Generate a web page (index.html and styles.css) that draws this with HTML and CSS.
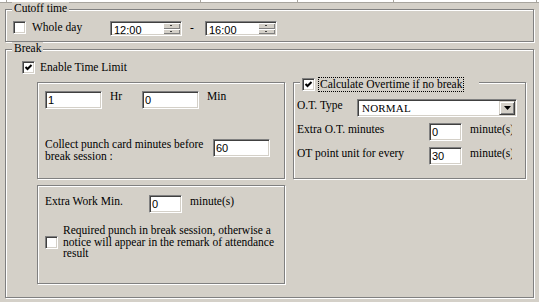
FILE: index.html
```html
<!DOCTYPE html>
<html lang="en">
<head>
    <meta charset="UTF-8">
    <title>Break settings</title>
    <link rel="stylesheet" href="styles.css">
</head>
<body>
    <!-- bottom edge of the grid above -->
    <div class="grid-edge">
        <span class="cell c1"></span><span class="cell c2"></span><span class="cell c3"></span><span class="cell c4"></span><span class="cell c5"></span>
    </div>

    <!-- Cutoff time -->
    <div class="group cutoff">
        <span class="legend">Cutoff time</span>
        <div class="cutoff-row">
            <span class="check"></span>
            <span class="day-label">Whole day</span>
            <div class="spin">
                <span class="spin-text">12:00</span>
                <span class="spin-btns"><span class="spin-btn up"></span><span class="spin-btn down"></span></span>
            </div>
            <span class="dash">-</span>
            <div class="spin">
                <span class="spin-text">16:00</span>
                <span class="spin-btns"><span class="spin-btn up"></span><span class="spin-btn down"></span></span>
            </div>
        </div>
    </div>

    <!-- Break -->
    <div class="group break">
        <span class="legend">Break</span>
        <div class="check-row">
            <span class="check checked"><svg viewBox="0 0 9 9" width="9" height="9"><polyline points="1.5,4 3.5,6 7.5,2" fill="none" stroke="#000" stroke-width="2"/></svg></span>
            <span class="check-label">Enable Time Limit</span>
        </div>

        <div class="cols">
            <div class="left-col">
                <div class="panel limit">
                    <div class="row">
                        <input class="field w57" type="text" value="1">
                        <span class="unit hr">Hr</span>
                        <input class="field w57" type="text" value="0">
                        <span class="unit">Min</span>
                    </div>
                    <div class="row collect">
                        <span class="collect-label">Collect punch card minutes before break session :</span>
                        <input class="field w57" type="text" value="60">
                    </div>
                </div>

                <div class="panel extra">
                    <div class="row">
                        <span class="extra-label">Extra Work Min.</span>
                        <input class="field w33" type="text" value="0">
                        <span class="unit">minute(s)</span>
                    </div>
                    <div class="row required">
                        <span class="check"></span>
                        <span class="required-text">Required punch in break session, otherwise a notice will appear in the remark of attendance result</span>
                    </div>
                </div>
            </div>

            <div class="panel ot">
                <div class="ot-legend">
                    <span class="check checked"><svg viewBox="0 0 9 9" width="9" height="9"><polyline points="1.5,4 3.5,6 7.5,2" fill="none" stroke="#000" stroke-width="2"/></svg></span>
                    <span class="focus">Calculate Overtime if no break</span>
                </div>
                <div class="row">
                    <span class="ot-type">O.T. Type</span>
                    <div class="combo">
                        <span class="combo-text">NORMAL</span>
                        <span class="combo-btn"><svg viewBox="0 0 7 4" width="7" height="4"><polygon points="0,0 7,0 3.5,4" fill="#000"/></svg></span>
                    </div>
                </div>
                <div class="row ot-row">
                    <span class="ot-label">Extra O.T. minutes</span>
                    <input class="field w33" type="text" value="0">
                    <span class="unit clip">minute(s)</span>
                </div>
                <div class="row ot-row">
                    <span class="ot-label">OT point unit for every</span>
                    <input class="field w33" type="text" value="30">
                    <span class="unit clip">minute(s)</span>
                </div>
            </div>
        </div>
    </div>
</body>
</html>
```

FILE: styles.css
```css
body {
    margin: 0;
    width: 539px;
    height: 302px;
    overflow: hidden;
    background: #d4d0c8;
    color: #000;
    font-family: "Liberation Serif", "Times New Roman", serif;
    font-size: 11.5px;
    line-height: 13px;
}
.grid-edge {
    display: flex;
    height: 2px;
    background: #fff;
    border-bottom: 1px solid #a8a59e;
}
.cell {
    border-right: 1px solid #a8a59e;
}
.c1 { width: 6px; }
.c2 { width: 193px; }
.c3 { width: 96px; }
.c4 { width: 95px; }
.c5 { width: 142px; }

/* etched group boxes */
.group, .panel {
    position: relative;
    box-sizing: border-box;
    border: 1px solid #808080;
    box-shadow: inset 1px 1px 0 #fff, 1px 1px 0 #fff;
}
.group {
    margin-left: 5px;
    width: 529px;
}
.legend {
    position: absolute;
    top: -8px;
    left: 6px;
    padding: 0 2px;
    background: #d4d0c8;
}
.cutoff {
    margin-top: 6px;
    height: 33px;
}
.break {
    margin-top: 7px;
    height: 249px;
    padding: 11px 0 0 16px;
}

/* sunken controls */
.check, .field, .spin, .combo {
    box-sizing: border-box;
    border: 1px solid;
    border-color: #808080 #fff #fff #808080;
    box-shadow: inset 1px 1px 0 #404040, inset -1px -1px 0 #d4d0c8;
    background: #fff;
}
.check {
    display: flex;
    align-items: center;
    justify-content: center;
    flex: none;
    width: 13px;
    height: 13px;
}
.check svg {
    display: block;
}
.field {
    height: 18px;
    margin: 0;
    padding: 0 2px;
    font-family: "Liberation Sans", Arial, sans-serif;
    font-size: 11px;
    color: #000;
    outline: none;
}
.w57 { width: 57px; }
.w33 { width: 33px; }

.cutoff-row {
    display: flex;
    align-items: flex-start;
    padding: 11px 0 0 7px;
}
.day-label {
    width: 78px;
    margin-left: 6px;
}
.spin {
    display: flex;
    width: 72px;
    height: 15px;
    padding: 1px;
}
.spin-text {
    flex: 1;
    padding-left: 2px;
    font-family: "Liberation Sans", Arial, sans-serif;
    font-size: 11px;
    line-height: 12px;
    margin-top: 1px;
}
.spin-btns {
    display: flex;
    flex-direction: column;
    width: 17px;
}
.spin-btn {
    flex: 1;
    position: relative;
    background: #d4d0c8;
    box-shadow: inset 1px 1px 0 #fff, inset -1px -1px 0 #808080;
}
.spin-btn::after {
    content: "";
    position: absolute;
    left: 7px;
    top: 2px;
    width: 2px;
    height: 1px;
    background: #404040;
}
.dash {
    width: 15px;
    margin-left: 8px;
}

.check-row {
    display: flex;
    align-items: center;
    height: 13px;
}
.check-label {
    margin-left: 5px;
}

.cols {
    display: flex;
    align-items: flex-start;
    gap: 8px;
    margin: 8px 0 0 15px;
}
.left-col {
    display: flex;
    flex-direction: column;
    gap: 6px;
    width: 248px;
}
.row {
    display: flex;
    align-items: flex-start;
}
.unit {
    margin-left: 8px;
}
.hr {
    width: 32px;
}

.limit {
    height: 97px;
    padding: 8px 0 0 7px;
}
.limit .unit {
    margin-top: -1px;
}
.collect {
    margin-top: 29px;
}
.collect-label {
    width: 168px;
    line-height: 12px;
}
.collect .field {
    margin-top: 1px;
}

.extra {
    height: 99px;
    padding: 9px 0 0 7px;
}
.extra-label {
    width: 104px;
}
.required {
    align-items: center;
    margin-top: 12px;
}
.required-text {
    width: 216px;
    margin-left: 5px;
    line-height: 11.5px;
}

.ot {
    width: 233px;
    height: 97px;
    padding: 16px 0 0 3px;
}
.ot-legend {
    position: absolute;
    top: -6px;
    left: 6px;
    width: 179px;
    height: 15px;
    padding-left: 2px;
    box-sizing: border-box;
    display: flex;
    align-items: center;
    background: #d4d0c8;
}
.focus {
    margin-left: 3px;
    padding: 0 1px;
    border: 1px dotted #000;
}
.ot-type {
    width: 60px;
}
.combo {
    display: flex;
    width: 160px;
    height: 18px;
    padding: 1px;
}
.combo-text {
    flex: 1;
    padding-left: 3px;
    font-size: 11px;
    line-height: 14px;
    letter-spacing: 0.2px;
}
.combo-btn {
    display: flex;
    align-items: center;
    justify-content: center;
    width: 16px;
    background: #d4d0c8;
    border: 1px solid;
    border-color: #d4d0c8 #404040 #404040 #d4d0c8;
    box-shadow: inset 1px 1px 0 #fff, inset -1px -1px 0 #808080;
    box-sizing: border-box;
}
.ot-row {
    margin-top: 6px;
}
.ot-label {
    width: 132px;
}
.clip {
    width: 42px;
    overflow: hidden;
    white-space: nowrap;
}
```
